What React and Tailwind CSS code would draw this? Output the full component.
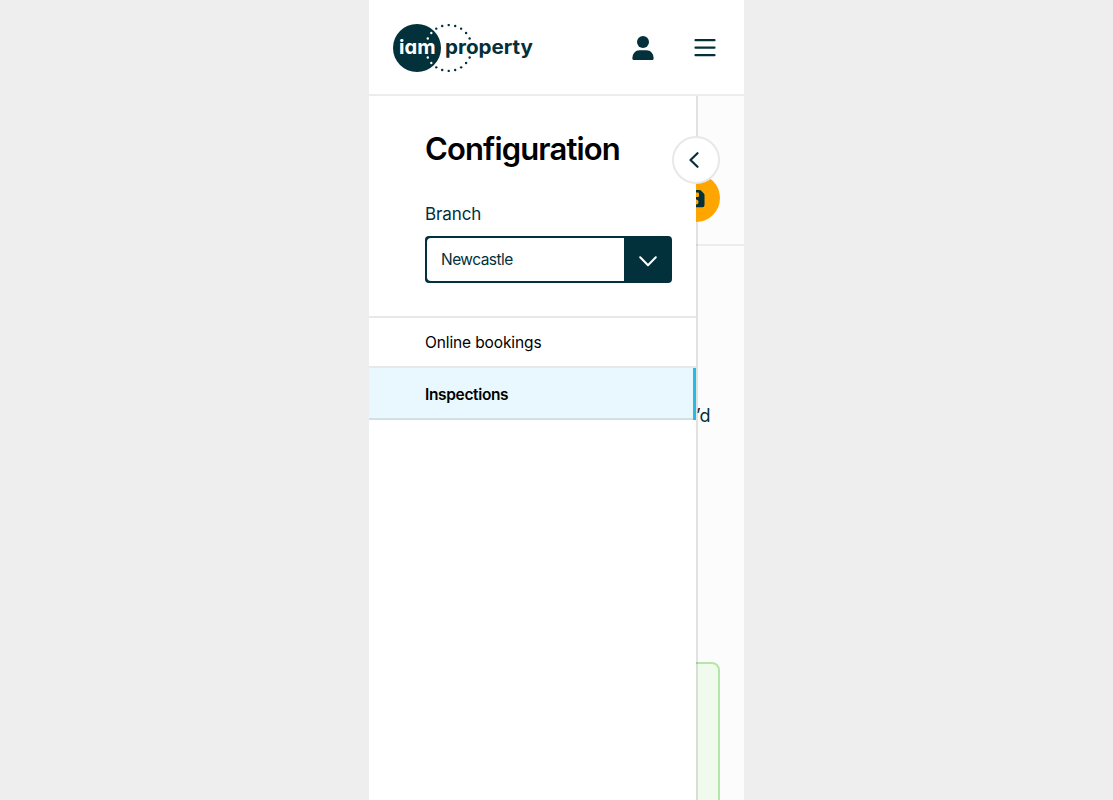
import React from "react";

const DOTS = Array.from({ length: 22 }, (_, i) => {
  const a = ((i * 360) / 22 - 90) * (Math.PI / 180);
  return { x: 55.7 + Math.cos(a) * 23, y: 24 + Math.sin(a) * 23, i };
}).filter((d) => ![5, 6, 16, 17].includes(d.i));

function Logo() {
  return (
    <svg width="144" height="48" viewBox="0 0 144 48" className="block" role="img" aria-label="iam property">
      <circle cx="24" cy="24" r="24" fill="#02303b" />
      {DOTS.map((d) => (
        <circle key={d.i} cx={d.x} cy={d.y} r="1.2" fill={Math.hypot(d.x - 24, d.y - 24) < 24 ? "#fff" : "#02303b"} />
      ))}
      <g fontFamily="Inter, sans-serif" fontWeight="700" style={{ fontFeatureSettings: '"cv11"' }}>
        <text x="6" y="30" fill="#fff" fontSize="20" textLength="36.500" lengthAdjust="spacingAndGlyphs">iam</text>
        <text x="52" y="30" fill="#02303b" fontSize="19" textLength="88" lengthAdjust="spacingAndGlyphs">property</text>
      </g>
    </svg>
  );
}

function Header() {
  return (
    <header className="flex h-24 shrink-0 items-center border-b-2 border-[#ececec] bg-white pl-6 pr-7 pt-0.5">
      <Logo />
      <button className="ml-auto mr-10" aria-label="Account">
        <svg width="22" height="24" viewBox="0 0 22 24" fill="#02303b" className="block">
          <circle cx="11" cy="6" r="6" />
          <path d="M1.800 24Q.4 24 .4 22.500C.4 17.500 3.500 14.300 7.500 14.300h7c4 0 7.100 3.200 7.100 8.200q0 1.500-1.400 1.500z" />
        </svg>
      </button>
      <button aria-label="Menu">
        <svg width="22" height="18" viewBox="0 0 22 18" stroke="#02303b" strokeWidth="2.200" strokeLinecap="round" className="block">
          <path d="M1.500 1.200h19M1.500 8.700h19M1.500 16.200h19" />
        </svg>
      </button>
    </header>
  );
}

function Drawer() {
  return (
    <aside className="relative z-10 w-[327px] shrink-0 bg-white font-['Inter',sans-serif]">
      <div className="h-[222px] border-b-2 border-[#e8e8e8] pl-14 pr-6 pt-8">
        <h1 className="h-10 whitespace-nowrap pt-px text-[31px] font-semibold leading-10 tracking-[-0.87px] text-black">Configuration</h1>
        <div className="mt-8 h-7 pt-0.5 text-[17px] leading-[24px] tracking-[-0.1px] text-[#02303b]">Branch</div>
        <button className="mt-2 flex h-[47px] w-full overflow-hidden rounded border-2 border-[#02303b] bg-[#02303b] text-left">
          <span className="flex-1 rounded-l-sm bg-white pl-3.5 text-[15.500px] leading-[43px] tracking-[-0.55px] text-[#02303b]">Newcastle</span>
          <span className="flex h-full w-[46px] items-center justify-center pl-0.5">
            <svg width="18" height="11" viewBox="0 0 18 11" fill="none" stroke="#fff" strokeWidth="2" strokeLinecap="round" strokeLinejoin="round" className="mt-1">
              <path d="m1.200 1.200 7.800 8 7.800-8" />
            </svg>
          </span>
        </button>
      </div>
      <nav>
        <a className="block h-[50px] border-b-2 border-[#e8e8e8] pl-14 text-[15.500px] leading-[49px] tracking-[-0.12px] text-black">Online bookings</a>
        <a className="flex h-[52px] bg-[#e8f8fe] text-[15.500px] font-semibold leading-[53px] tracking-[-0.35px] text-black">
          <span className="flex-1 border-b-2 border-[#d1e0e5] pl-14">Inspections</span>
          <span className="w-[3px] bg-[#24bce3]" />
        </a>
      </nav>
      <button aria-label="Collapse" className="absolute left-[303px] top-10 flex size-12 items-center justify-center rounded-full border-2 border-[#e8e8e8] bg-white">
        <svg width="10" height="16" viewBox="0 0 10 16" fill="none" stroke="#02303b" strokeWidth="2.200" strokeLinecap="round" strokeLinejoin="round" className="mr-1">
          <path d="M8.500 1.200 1.500 8l7 6.800" />
        </svg>
      </button>
    </aside>
  );
}

function SaveButton() {
  return (
    <button aria-label="Save" className="absolute -left-6 top-[78px]">
      <svg width="48" height="48" viewBox="0 0 48 48" className="block">
        <circle cx="24" cy="24" r="24" fill="#ffa500" />
        <path fill="#02303b" fillRule="evenodd" d="M17.500 16h10q1 0 1.700.7l2.600 2.700q.7.700.7 1.700V31a2.200 2.200 0 0 1-2.200 2.200H17.500A2.200 2.200 0 0 1 15.300 31V18.200A2.200 2.200 0 0 1 17.500 16zM19 18.500h7q1 0 1 1v2.500q0 1-1 1h-7zM24 25.500a2.500 2.500 0 1 1 0 5 2.500 2.500 0 0 1 0-5z" />
      </svg>
    </button>
  );
}

function PageBehind() {
  return (
    <main className="relative flex-1 overflow-hidden bg-[#fcfcfc]">
      <div className="h-[150px] border-b-2 border-[#ececec]" />
      <div className="absolute -left-[200px] right-6 top-[566px] h-[300px] rounded-lg border-2 border-[#b5e6a9] bg-[#f0faed]" />
      <div className="absolute inset-y-0 left-0 w-0.5 bg-black/10" />
      <p className="relative mt-[158px] whitespace-nowrap pl-px font-['Inter',sans-serif] text-[18px] leading-6 text-[#02303b]">
        <span className="-ml-px tracking-[-0.1px]">’d</span>
      </p>
      <SaveButton />
    </main>
  );
}

export default function App() {
  return (
    <div className="flex h-screen justify-center overflow-hidden bg-[#eeeeee]">
      <div className="flex w-[375px] flex-col bg-white">
        <Header />
        <div className="flex min-h-0 flex-1">
          <Drawer />
          <PageBehind />
        </div>
      </div>
    </div>
  );
}
